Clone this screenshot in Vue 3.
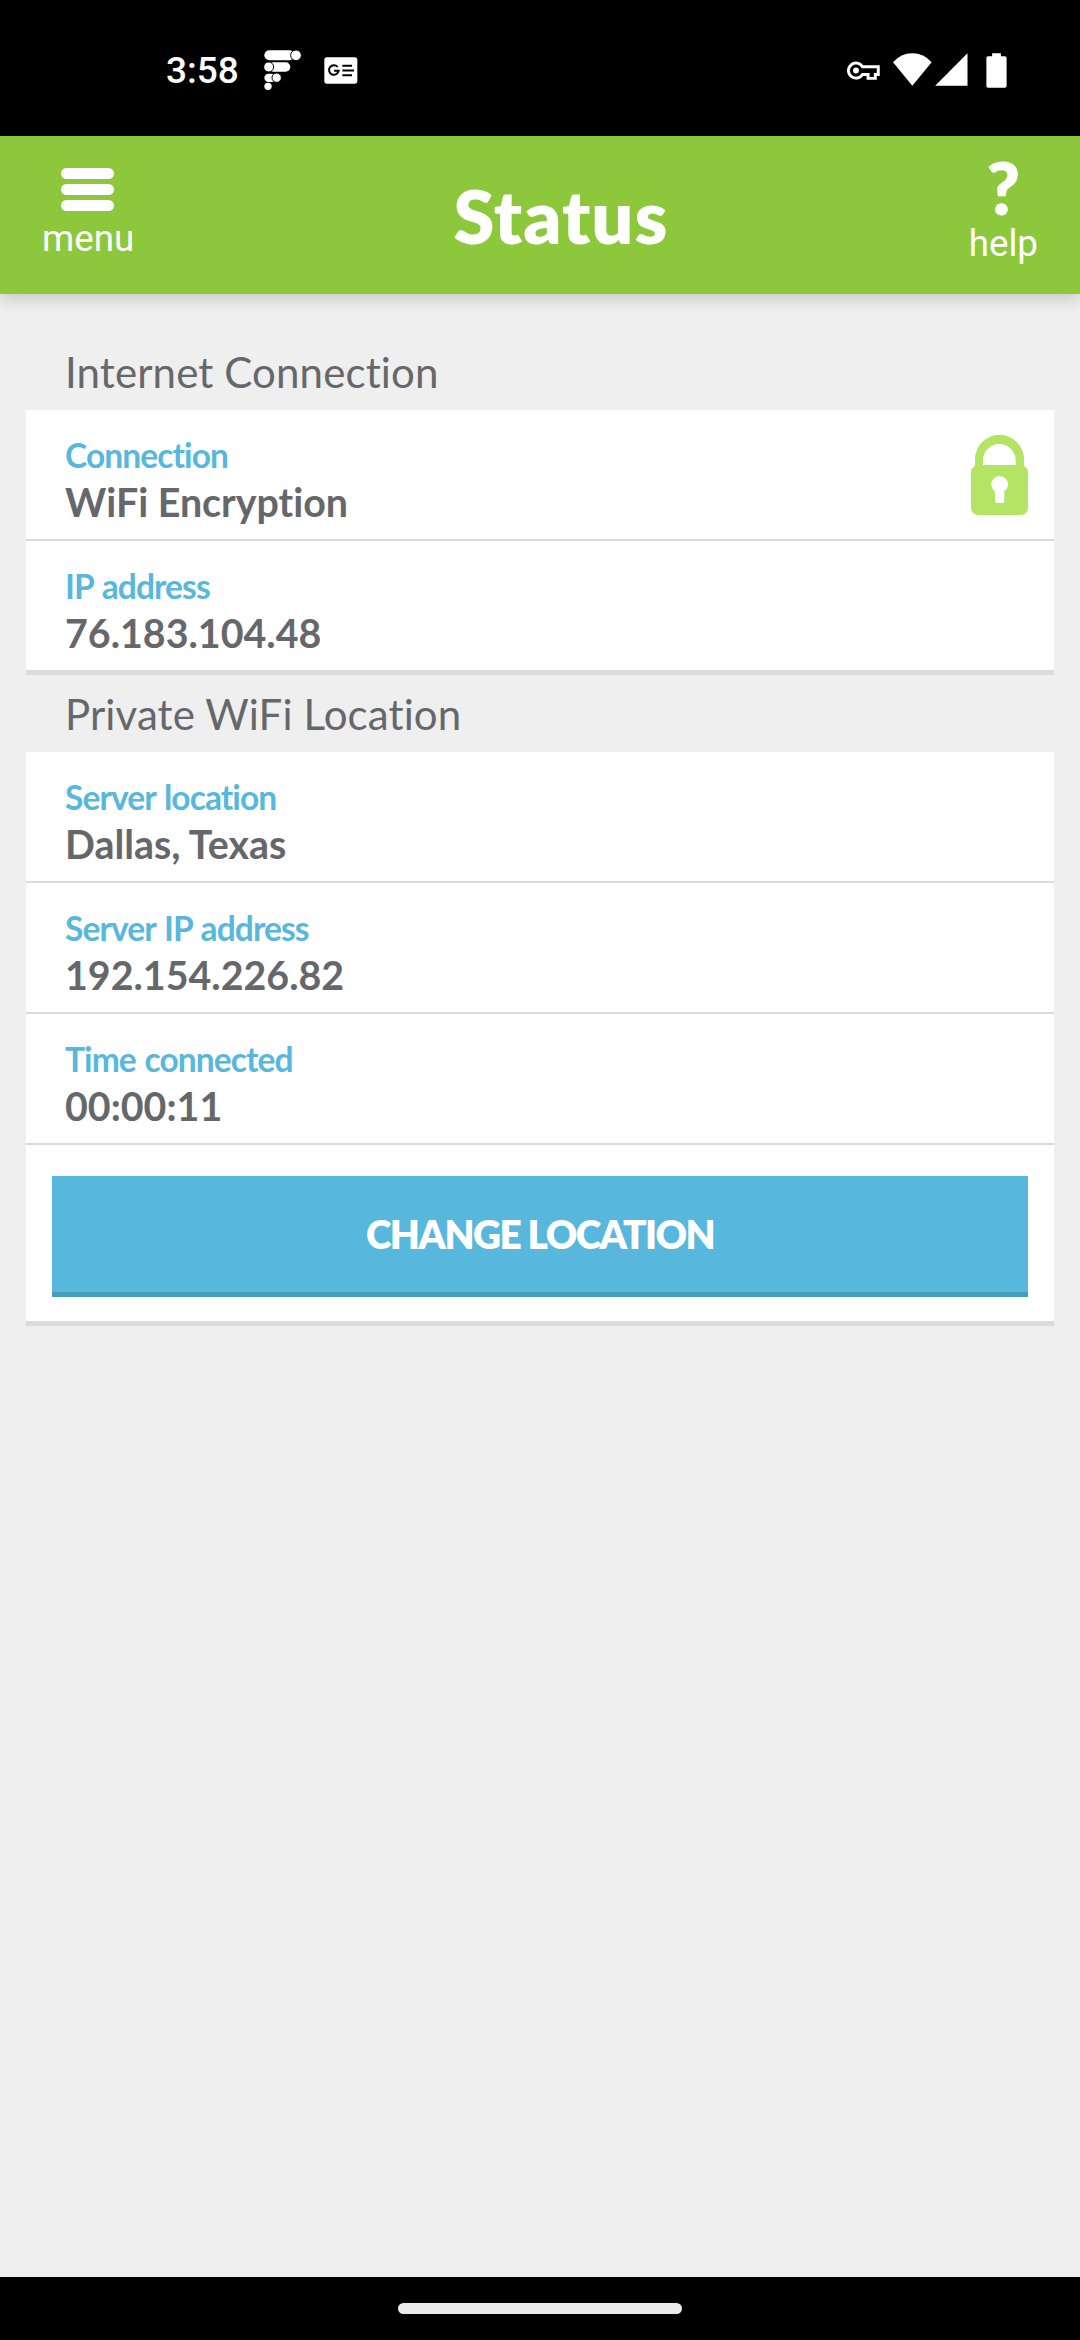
<template>
  <div class="screen">
    <div class="status-bar">
      <div class="status-left">
        <span class="clock">3:58</span>
        <svg class="icon-dots" viewBox="370 58 120 126">
          <rect x="374" y="62" width="90" height="30" rx="15" />
          <rect x="386" y="98" width="66" height="28" rx="14" />
          <rect x="374" y="132" width="34" height="25" rx="12.5" />
          <g class="dot">
            <circle cx="469" cy="77" r="16" />
            <circle cx="387" cy="112" r="15" />
            <circle cx="411" cy="144" r="14" />
          </g>
          <circle cx="385" cy="170" r="11" />
        </svg>
        <svg class="icon-news" viewBox="553 82 102 81">
          <rect x="554" y="83" width="99" height="79" rx="8" />
          <path class="ink" d="M594 112a14.500 14.500 0 1 0 3 11h-14" />
          <path class="ink" d="M608 108h29M608 122.500h35M608 137h29" />
        </svg>
      </div>
      <div class="status-right">
        <svg class="icon-key" viewBox="75 90 106 64">
          <path class="key-outline" d="M125 110.500A23 23 0 1 0 125 134H142V146H164V134H173V110.500Z" />
          <circle class="key-bow" cx="105" cy="122" r="16" />
          <circle class="key-hole" cx="105" cy="122" r="9" />
          <path class="key-shaft" d="M122 122h44M152.500 122v18" />
        </svg>
        <svg class="icon-wifi" viewBox="216 68 118 100">
          <path d="M216 96Q240 69 274.500 69T333 96L274.500 167z" />
        </svg>
        <svg class="icon-signal" viewBox="343 68 99 100">
          <path d="M441 69v98h-98z" />
        </svg>
        <svg class="icon-battery" viewBox="497 68 62 104">
          <path d="M515 69h26v9h12q5 0 5 5v83q0 5-5 5h-50q-5 0-5-5v-83q0-5 5-5h12z" />
        </svg>
      </div>
    </div>

    <header class="app-header">
      <button class="nav-button menu">
        <span class="bars"><i v-for="n in 3" :key="n" /></span>
        <span>menu</span>
      </button>
      <h1>Status</h1>
      <button class="nav-button help">
        <b>?</b>
        <span>help</span>
      </button>
    </header>

    <main>
      <section v-for="section in sections" :key="section.title">
        <h2>{{ section.title }}</h2>
        <div class="card">
          <div v-for="item in section.items" :key="item.label" class="row">
            <div>
              <div class="label">{{ item.label }}</div>
              <div class="value">{{ item.value }}</div>
            </div>
            <svg v-if="item.secure" class="icon-lock" viewBox="213 135 171 240">
              <path
                fill-rule="evenodd"
                d="M225 228v-20a73.500 73.500 0 0 1 147 0v20q12 6 12 18v106q0 23-23 23H236q-23 0-23-23V246q0-12 12-18zM249 225h98v-14a49 49 0 0 0-98 0zM285 304v29q0 6 6 6h16q6 0 6-6v-29a25 25 0 1 0-28 0z"
              />
            </svg>
          </div>
          <div v-if="section.action" class="action">
            <button class="primary">{{ section.action }}</button>
          </div>
        </div>
      </section>
    </main>

    <div class="nav-bar"><span class="handle" /></div>
  </div>
</template>

<script setup>
const sections = [
  {
    title: 'Internet Connection',
    items: [
      { label: 'Connection', value: 'WiFi Encryption', secure: true },
      { label: 'IP address', value: '76.183.104.48' }
    ]
  },
  {
    title: 'Private WiFi Location',
    items: [
      { label: 'Server location', value: 'Dallas, Texas' },
      { label: 'Server IP address', value: '192.154.226.82' },
      { label: 'Time connected', value: '00:00:11' }
    ],
    action: 'CHANGE LOCATION'
  }
]
</script>

<style>
body {
  margin: 0;
}
</style>

<style scoped>
.screen {
  width: 1080px;
  height: 2340px;
  display: flex;
  flex-direction: column;
  background: #efefef;
  color: #66676b;
  font-family: Lato, sans-serif;
  font-variant-ligatures: none;
  overflow: hidden;
}

svg {
  display: block;
  flex-shrink: 0;
}

button {
  border: 0;
  padding: 0;
  color: #fff;
  background: none;
}

.status-bar {
  height: 136px;
  flex-shrink: 0;
  box-sizing: border-box;
  padding: 0 73px 0 166px;
  display: flex;
  justify-content: space-between;
  background: #000;
  fill: #fff;
}

.status-left,
.status-right {
  display: flex;
  align-items: flex-start;
}

.clock {
  width: 97px;
  margin-top: 49px;
  color: #fff;
  font: 500 37px/44px Roboto, sans-serif;
}

.icon-dots {
  width: 40px;
  height: 42px;
  margin-top: 49px;
}

.dot {
  stroke: #000;
  stroke-width: 3;
}

.icon-news {
  width: 34px;
  height: 27px;
  margin: 57px 0 0 21px;
}

.ink {
  fill: none;
  stroke: #000;
  stroke-width: 6;
}

.icon-key {
  width: 35px;
  height: 21px;
  margin-top: 60px;
}

.key-outline {
  fill: #000;
  stroke: #fff;
  stroke-width: 9;
}

.key-bow {
  fill: #000;
}

.key-hole {
  fill: #fff;
}

.key-bow,
.key-hole {
  stroke: none;
}

.key-shaft {
  fill: none;
  stroke: #000;
  stroke-width: 9;
}

.icon-wifi {
  width: 39px;
  height: 33px;
  margin: 53px 0 0 12px;
}

.icon-signal {
  width: 33px;
  height: 33px;
  margin: 53px 0 0 3px;
}

.icon-battery {
  width: 21px;
  height: 35px;
  margin: 53px 0 0 18px;
}

.app-header {
  height: 158px;
  flex-shrink: 0;
  box-sizing: border-box;
  padding: 0 42px;
  display: flex;
  justify-content: space-between;
  background: #8dc83c;
  color: #fff;
  box-shadow: 0 5px 16px rgba(0, 0, 0, 0.17);
  z-index: 1;
}

.nav-button {
  display: flex;
  flex-direction: column;
  align-items: center;
  font: 36.750px/44px Roboto, sans-serif;
}

.bars {
  width: 53px;
  margin: 32px 2px 6px 0;
  display: flex;
  flex-direction: column;
  gap: 5px;
}

.bars i {
  height: 11px;
  border-radius: 6px;
  background: #fff;
}

.help b {
  margin-top: 16px;
  font: 800 72px/70px Lato, sans-serif;
}

h1 {
  margin: 36px 0 0 19px;
  font-size: 74px;
  line-height: 88px;
  font-weight: 800;
  letter-spacing: 1px;
}

main {
  flex: 1;
  padding: 39px 26px 0;
}

h2 {
  height: 77px;
  margin: 0;
  padding: 14px 39px 0;
  box-sizing: border-box;
  font-size: 42px;
  line-height: 51px;
  font-weight: 400;
  letter-spacing: 0.120px;
}

.card {
  background: #fff;
  border-bottom: 5px solid #dbdbdb;
}

.row {
  height: 129px;
  box-sizing: border-box;
  padding: 23px 26px 0 39px;
  display: flex;
  justify-content: space-between;
}

.row:not(:last-child) {
  height: 131px;
  border-bottom: 2px solid #dbdbdb;
}

.label {
  font-size: 33.500px;
  line-height: 44px;
  font-weight: 700;
  letter-spacing: -0.900px;
  word-spacing: 1.500px;
  color: #58b7dc;
}

.value {
  font-size: 39.375px;
  line-height: 49px;
  font-weight: 700;
}

.icon-lock {
  width: 57px;
  height: 80px;
  margin-top: 2px;
  fill: #b4e463;
}

.action {
  padding: 31px 26px 24px;
}

.primary {
  display: block;
  width: 100%;
  height: 121px;
  border-bottom: 5px solid #459cbc;
  background: #58b7dc;
  font: 800 38.800px/116px Lato, sans-serif;
  letter-spacing: -1.550px;
}

.nav-bar {
  height: 63px;
  flex-shrink: 0;
  display: flex;
  justify-content: center;
  align-items: center;
  background: #000;
}

.handle {
  width: 284px;
  height: 11px;
  border-radius: 6px;
  background: #ebebeb;
}
</style>
